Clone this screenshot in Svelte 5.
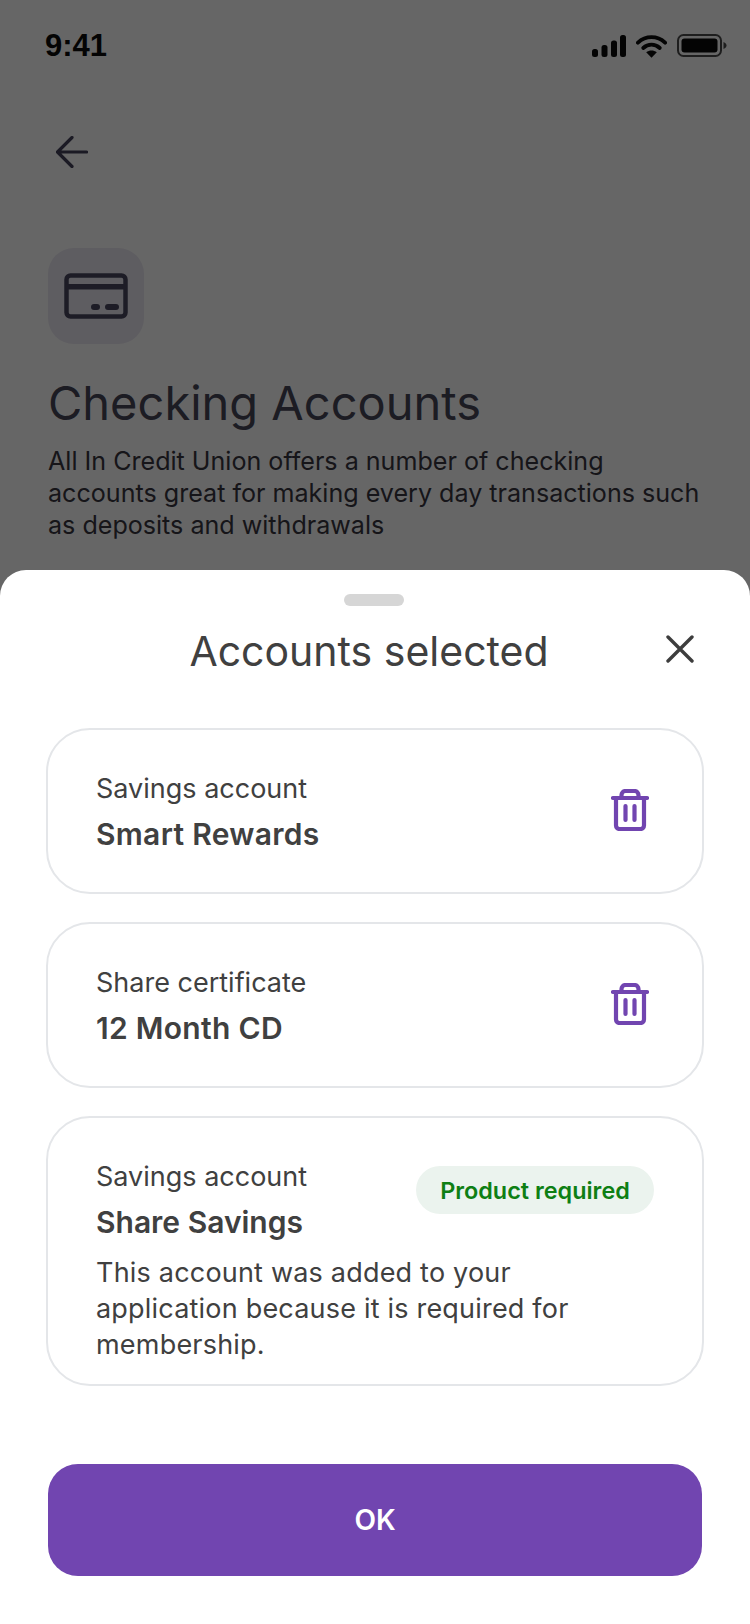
<script>
  const accounts = [
    { type: "Savings account", name: "Smart Rewards" },
    { type: "Share certificate", name: "12 Month CD" }
  ];
</script>

<div class="page">
  <div class="status">
    <span class="time">9:41</span>
    <div class="status-icons">
      <svg width="34" height="22" viewBox="0 0 34 22">
        <rect x="0" y="14" width="6" height="8" rx="2.5" fill="#0a0a0a" />
        <rect x="9.5" y="10" width="6" height="12" rx="2.5" fill="#0a0a0a" />
        <rect x="19" y="5.5" width="6" height="16.5" rx="2.5" fill="#0a0a0a" />
        <rect x="28" y="0" width="6" height="22" rx="2.5" fill="#0a0a0a" />
      </svg>
      <svg width="31" height="24" viewBox="0 0 32 24">
        <path d="M2 8.5C10 1 22 1 30 8.5" fill="none" stroke="#0a0a0a" stroke-width="4" stroke-linecap="round" />
        <path d="M7.5 14C12.5 9.5 19.5 9.5 24.5 14" fill="none" stroke="#0a0a0a" stroke-width="4" stroke-linecap="round" />
        <path d="M10.5 18.5L16 24L21.5 18.5C18 16 14 16 10.5 18.5Z" fill="#0a0a0a" />
      </svg>
      <svg width="50" height="24" viewBox="0 0 50 24">
        <rect x="1" y="1" width="43" height="21" rx="5.5" fill="none" stroke="#4d4d4d" stroke-width="2" />
        <rect x="4.5" y="4.5" width="36" height="14" rx="3" fill="#0a0a0a" />
        <path d="M46.5 8C48.5 8.8 49.5 10 49.5 11.5C49.5 13 48.5 14.2 46.5 15Z" fill="#4d4d4d" />
      </svg>
    </div>
  </div>

  <button class="back" aria-label="Back">
    <svg width="32" height="32" viewBox="0 0 32 32">
      <path d="M30.5 16H2M16 1.5L1.5 16L16 30.5" fill="none" stroke="#45435a" stroke-width="3.2" stroke-linecap="round" stroke-linejoin="round" />
    </svg>
  </button>

  <div class="tile">
    <svg width="64" height="46" viewBox="0 0 64 46">
      <rect x="2.5" y="2.5" width="59" height="41" rx="4" fill="none" stroke="#4a4860" stroke-width="4.5" />
      <rect x="2" y="11" width="60" height="5.5" fill="#4a4860" />
      <rect x="27" y="31" width="9" height="6" rx="3" fill="#4a4860" />
      <rect x="41" y="31" width="14" height="6" rx="3" fill="#4a4860" />
    </svg>
  </div>

  <h1>Checking Accounts</h1>
  <p class="intro">All In Credit Union offers a number of checking accounts great for making every day transactions such as deposits and withdrawals</p>

  <div class="overlay"></div>

  <div class="sheet">
    <div class="handle"></div>
    <div class="sheet-head">
      <h2>Accounts selected</h2>
      <button class="close" aria-label="Close">
        <svg width="28" height="28" viewBox="0 0 28 28">
          <path d="M2 2L26 26M26 2L2 26" fill="none" stroke="#3d3d3d" stroke-width="3.4" stroke-linecap="round" />
        </svg>
      </button>
    </div>

    <div class="cards">
      {#each accounts as a}
        <div class="card">
          <div>
            <div class="type">{a.type}</div>
            <div class="name">{a.name}</div>
          </div>
          <button class="trash" aria-label="Remove">
            <svg width="38" height="42" viewBox="0 0 38 42">
              <path d="M2 9H36" fill="none" stroke="#7145b0" stroke-width="4.2" stroke-linecap="round" />
              <path d="M5 10V36.5A3.5 3.5 0 0 0 8.5 40H29.5A3.5 3.5 0 0 0 33 36.5V10" fill="none" stroke="#7145b0" stroke-width="4.2" />
              <path d="M10.5 9V6A4 4 0 0 1 14.5 2H23.5A4 4 0 0 1 27.5 6V9" fill="none" stroke="#7145b0" stroke-width="4.2" />
              <path d="M14.5 17V31M23.5 17V31" fill="none" stroke="#7145b0" stroke-width="4.2" stroke-linecap="round" />
            </svg>
          </button>
        </div>
      {/each}

      <div class="card required">
        <div class="required-top">
          <div>
            <div class="type">Savings account</div>
            <div class="name">Share Savings</div>
          </div>
          <span class="pill">Product required</span>
        </div>
        <p class="note">This account was added to your application because it is required for membership.</p>
      </div>
    </div>

    <button class="ok">OK</button>
  </div>
</div>

<style>
  :global(body) {
    margin: 0;
    background: #fff;
  }
  .page {
    position: relative;
    width: 750px;
    height: 1624px;
    overflow: hidden;
    background: #fff;
    font-family: Inter, "Noto Sans", sans-serif;
    color: #484658;
  }
  button {
    border: none;
    background: none;
    padding: 0;
    font: inherit;
  }
  svg {
    display: block;
  }
  .status {
    height: 92px;
    padding: 0 23px 0 45px;
    display: flex;
    justify-content: space-between;
    align-items: center;
    box-sizing: border-box;
  }
  .time {
    font-family: "Liberation Sans", sans-serif;
    font-weight: 700;
    font-size: 31px;
    color: #0a0a0a;
  }
  .status-icons {
    display: flex;
    align-items: center;
    gap: 10px;
  }
  .back {
    display: block;
    margin: 44px 0 0 56px;
    height: 32px;
  }
  .tile {
    margin: 80px 0 0 48px;
    width: 96px;
    height: 96px;
    border-radius: 26px;
    background: #ebe8f2;
    display: flex;
    align-items: center;
    justify-content: center;
  }
  h1 {
    margin: 31px 0 0 48px;
    font-size: 47px;
    line-height: 56px;
    font-weight: 400;
  }
  .intro {
    margin: 14px 44px 0 48px;
    font-size: 25.1px;
    line-height: 32px;
    color: #38363f;
  }
  .overlay {
    position: absolute;
    inset: 0;
    background: rgba(0, 0, 0, 0.6);
  }
  .sheet {
    position: absolute;
    left: 0;
    right: 0;
    bottom: 0;
    height: 1054px;
    box-sizing: border-box;
    background: #fff;
    border-radius: 26px 26px 0 0;
    padding: 24px 46px 0;
    color: #404040;
  }
  .handle {
    width: 60px;
    height: 12px;
    margin: 0 auto;
    border-radius: 6px;
    background: #d6d6d6;
    transform: translateX(-1px);
  }
  .sheet-head {
    position: relative;
    margin-top: 19px;
    text-align: center;
  }
  h2 {
    margin: 0;
    padding-right: 12px;
    font-size: 41px;
    line-height: 52px;
    font-weight: 400;
  }
  .close {
    position: absolute;
    right: 10px;
    top: 10px;
  }
  .cards {
    margin-top: 51px;
    display: flex;
    flex-direction: column;
    gap: 28px;
  }
  .card {
    box-sizing: border-box;
    height: 166px;
    border: 2px solid #e4e6e9;
    border-radius: 44px;
    padding: 0 53px 0 48px;
    display: flex;
    align-items: center;
    justify-content: space-between;
  }
  .trash {
    margin-top: -2px;
  }
  .type {
    font-size: 27px;
    line-height: 36px;
  }
  .name {
    margin-top: 9px;
    font-size: 30px;
    line-height: 36px;
    font-weight: 600;
    letter-spacing: 0.3px;
  }
  .required {
    height: 270px;
    display: block;
    padding: 41px 48px 0;
  }
  .required .name {
    letter-spacing: 0;
  }
  .required-top {
    display: flex;
    justify-content: space-between;
    align-items: flex-start;
  }
  .pill {
    margin-top: 7px;
    height: 48px;
    width: 238px;
    border-radius: 24px;
    background: #ebf3ee;
    color: #0e7f14;
    font-size: 23.4px;
    font-weight: 600;
    display: flex;
    align-items: center;
    justify-content: center;
  }
  .note {
    margin: 15px 0 0;
    max-width: 500px;
    font-size: 27px;
    line-height: 36px;
    letter-spacing: 0.2px;
  }
  .ok {
    display: block;
    margin: 78px 2px 0;
    width: 654px;
    height: 112px;
    border-radius: 30px;
    background: #7145b0;
    color: #fff;
    font-size: 28px;
    font-weight: 600;
  }
</style>
